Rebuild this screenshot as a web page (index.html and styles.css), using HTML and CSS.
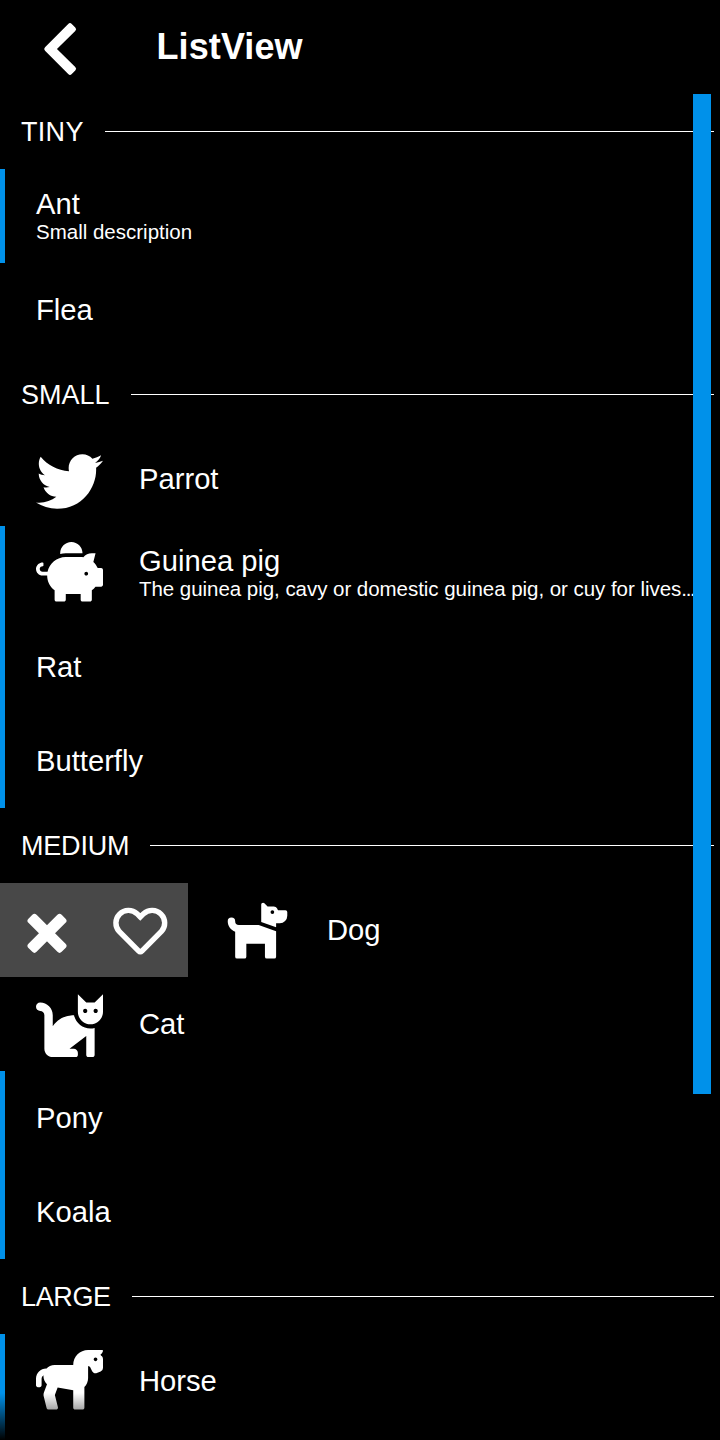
FILE: index.html
```html
<!DOCTYPE html>
<html lang="en">
<head>
<meta charset="utf-8">
<title>ListView</title>
<link rel="stylesheet" href="styles.css">
</head>
<body>
<div class="app">
  <header class="header">
    <svg class="back" viewBox="0 0 94 94"><path d="M46.8 49 70 25.7 73.5 29.2 53.4 49 73.5 68.8 70 72.3Z"/></svg>
    <h1 class="title">ListView</h1>
  </header>
  <main class="list">
    <h2 class="section wide"><span class="label">TINY</span></h2>
    <div class="row marked"><div class="text"><div class="name">Ant</div><div class="desc">Small description</div></div></div>
    <div class="row"><div class="name">Flea</div></div>

    <h2 class="section"><span class="label">SMALL</span></h2>
    <div class="row">
      <svg class="icon bird" viewBox="0 0 512 512"><path d="M459.37 151.716c.325 4.548.325 9.097.325 13.645 0 138.72-105.583 298.558-298.558 298.558-59.452 0-114.68-17.219-161.137-47.106 8.447.974 16.568 1.299 25.34 1.299 49.055 0 94.213-16.568 130.274-44.832-46.132-.975-84.792-31.188-98.112-72.772 6.498.974 12.995 1.624 19.818 1.624 9.421 0 18.843-1.3 27.614-3.573-48.081-9.747-84.143-51.98-84.143-102.985v-1.299c13.969 7.797 30.214 12.67 47.431 13.319-28.264-18.843-46.781-51.005-46.781-87.391 0-19.492 5.197-37.36 14.294-52.954 51.655 63.675 129.3 105.258 216.365 109.807-1.624-7.797-2.599-15.918-2.599-24.04 0-57.828 46.782-104.934 104.934-104.934 30.213 0 57.502 12.67 76.67 33.137 23.715-4.548 46.456-13.32 66.599-25.34-7.798 24.366-24.366 44.833-46.132 57.827 21.117-2.273 41.584-8.122 60.426-16.243-14.292 20.791-32.161 39.308-52.628 54.253z"/></svg>
      <div class="name">Parrot</div>
    </div>
    <div class="row marked">
      <svg class="icon" viewBox="0 0 576 512"><path d="M560 224h-29.5c-8.8-20-21.6-37.7-37.4-52.5L512 96h-32c-29.4 0-55.4 13.5-73 34.3-7.6-1.1-15.1-2.3-23-2.3H256c-77.4 0-141.9 55-156.8 128H56c-14.8 0-26.5-13.5-23.5-28.8C34.7 215.8 45.4 208 57 208h1c3.3 0 6-2.7 6-6v-20c0-3.3-2.7-6-6-6-28.5 0-53.9 20.4-57.5 48.6C-3.9 258.8 22.7 288 56 288h40c0 52.2 25.4 98.1 64 127.3V496c0 8.8 7.2 16 16 16h64c8.8 0 16-7.2 16-16v-48h128v48c0 8.8 7.2 16 16 16h64c8.8 0 16-7.2 16-16v-80.7c11.8-8.9 22.3-19.4 31.3-31.3H560c8.8 0 16-7.2 16-16V240c0-8.8-7.2-16-16-16zm-128 64c-8.8 0-16-7.2-16-16s7.2-16 16-16 16 7.2 16 16-7.2 16-16 16zM256 96h128c5.4 0 10.7.4 15.9.8 0-.3.1-.5.1-.8 0-53-43-96-96-96s-96 43-96 96c0 2.1.5 4.1.6 6.2 15.2-3.9 31-6.2 47.4-6.2z"/></svg>
      <div class="text"><div class="name">Guinea pig</div><div class="desc long">The guinea pig, cavy or domestic guinea pig, or cuy for lives<span class="dots">...</span></div></div>
    </div>
    <div class="row marked"><div class="name">Rat</div></div>
    <div class="row marked"><div class="name">Butterfly</div></div>

    <h2 class="section snug"><span class="label">MEDIUM</span></h2>
    <div class="row swiped">
      <div class="actions">
        <svg class="action" viewBox="0 0 94 94"><g transform="translate(47 50.3) rotate(45)"><rect x="-23.5" y="-5.75" width="47" height="11.5" rx="3"/><rect x="-5.75" y="-23.5" width="11.5" height="47" rx="3"/></g></svg>
        <svg class="action outline" viewBox="0 0 94 94"><path d="M46.3 34 43 30.7A12.6 12.6 0 0 0 25.2 48.5L44.5 67.8Q46.3 69.6 48.1 67.8L67.4 48.5A12.6 12.6 0 0 0 49.6 30.7Z"/></svg>
      </div>
      <svg class="icon" viewBox="0 0 576 512"><path d="M298.06,224,448,277.55V496a16,16,0,0,1-16,16H368a16,16,0,0,1-16-16V384H192V496a16,16,0,0,1-16,16H112a16,16,0,0,1-16-16V282.09C58.84,268.84,32,233.66,32,192a32,32,0,0,1,64,0,32.06,32.06,0,0,0,32,32ZM544,112v32a64,64,0,0,1-64,64H448v35.58L320,197.87V48c0-14.25,17.22-21.39,27.31-11.31L374.59,64h53.63c10.91,0,23.75,7.92,28.62,17.69L464,96h64A16,16,0,0,1,544,112Zm-112,0a16,16,0,1,0-16,16A16,16,0,0,0,432,112Z"/></svg>
      <div class="name">Dog</div>
    </div>
    <div class="row">
      <svg class="icon" viewBox="0 0 512 512"><path d="M290.59 192c-20.18 0-106.82 1.98-162.59 85.95V192c0-52.94-43.06-96-96-96-17.67 0-32 14.33-32 32s14.33 32 32 32c17.64 0 32 14.36 32 32v256c0 35.3 28.7 64 64 64h176c8.84 0 16-7.16 16-16v-16c0-17.67-14.33-32-32-32h-32l128-96v144c0 8.84 7.16 16 16 16h32c8.84 0 16-7.16 16-16V289.86c-10.29 2.67-20.89 4.54-32 4.54-61.81 0-113.52-44.05-125.41-102.4zM448 96h-64l-64-64v134.4c0 53.02 42.98 96 96 96s96-42.98 96-96V32l-64 64zm-72 80c-8.84 0-16-7.16-16-16s7.16-16 16-16 16 7.16 16 16-7.16 16-16 16zm80 0c-8.84 0-16-7.16-16-16s7.16-16 16-16 16 7.16 16 16-7.16 16-16 16z"/></svg>
      <div class="name">Cat</div>
    </div>
    <div class="row marked"><div class="name">Pony</div></div>
    <div class="row marked"><div class="name">Koala</div></div>

    <h2 class="section tight"><span class="label">LARGE</span></h2>
    <div class="row marked">
      <svg class="icon" viewBox="0 0 576 512"><path d="M575.92 76.6c-.01-8.13-3.02-15.87-8.58-21.8-3.78-4.03-8.58-9.12-13.69-14.5 11.06-6.84 19.5-17.49 22.18-30.66C576.85 4.68 572.96 0 567.9 0H447.92c-70.69 0-128 57.31-128 128H160c-28.84 0-54.4 12.98-72 33.11V160c-48.53 0-88 39.47-88 88v56c0 8.84 7.16 16 16 16h16c8.84 0 16-7.16 16-16v-56c0-13.22 6.87-24.39 16.78-31.68-.21 2.58-.78 5.05-.78 7.68 0 27.64 11.84 52.36 30.54 69.88l-25.72 68.6a63.945 63.945 0 0 0-2.16 37.99l24.85 99.41A15.982 15.982 0 0 0 107.02 512h65.96c10.41 0 18.05-9.78 15.52-19.88l-26.31-105.26 23.84-63.59L320 345.6V496c0 8.84 7.16 16 16 16h64c8.84 0 16-7.16 16-16V318.22c19.74-20.19 32-47.75 32-78.22 0-.22-.07-.42-.08-.64V136.89l16 7.11 18.9 37.7c7.45 14.87 25.05 21.55 40.49 15.37l32.55-13.02a31.997 31.997 0 0 0 20.12-29.74l-.06-77.71zm-64 19.4c-8.84 0-16-7.16-16-16s7.16-16 16-16 16 7.16 16 16-7.16 16-16 16z"/></svg>
      <div class="name">Horse</div>
    </div>
    <div class="row marked"></div>
  </main>
  <div class="fade"></div>
  <div class="scrollbar"></div>
</div>
</body>
</html>
```

FILE: styles.css
```css
* { box-sizing: border-box; }

body {
  margin: 0;
  background: #000;
  color: #fff;
  font-family: "Liberation Sans", Arial, sans-serif;
}

.app {
  position: relative;
  width: 720px;
  height: 1440px;
  overflow: hidden;
}

.header {
  display: flex;
  align-items: center;
  height: 94px;
}

.back {
  width: 94px;
  height: 94px;
  fill: #fff;
  stroke: #fff;
  stroke-width: 5;
  stroke-linejoin: round;
}

.title {
  margin: 0 0 0 62.5px;
  font-size: 36px;
  line-height: 40px;
  font-weight: 700;
  letter-spacing: 0.1px;
}

.section {
  display: flex;
  align-items: center;
  gap: 21px;
  height: 75px;
  margin: 0;
  padding: 0 6px 0 21px;
  font-size: 27px;
  font-weight: 400;
}

.section::after {
  content: "";
  flex: 1;
  height: 1px;
  background: #fff;
}

.label { padding-top: 2px; }
.wide { letter-spacing: 0.3px; }
.snug { letter-spacing: -0.2px; }
.tight { letter-spacing: -0.35px; }

.row {
  display: flex;
  align-items: center;
  gap: 36px;
  height: 94px;
  padding-left: 31px;
  border-left: 5px solid transparent;
  white-space: nowrap;
}

.marked { border-left-color: #0091ea; }

.swiped {
  padding-left: 0;
  border-left: 0;
}

.text { padding-bottom: 2px; }

.name {
  font-size: 29.2px;
  line-height: 34px;
}

.desc {
  font-size: 20.5px;
  line-height: 22px;
}

.long { letter-spacing: -0.04px; }
.dots { letter-spacing: -1.3px; }

.icon {
  flex: none;
  width: 67px;
  height: auto;
  margin-bottom: 1.5px;
  fill: #fff;
}

.bird {
  margin-top: 5px;
  margin-bottom: 0;
}

.actions {
  display: flex;
  width: 188px;
  height: 94px;
  background: #484848;
}

.action {
  width: 94px;
  height: 94px;
  fill: #fff;
}

.outline {
  fill: none;
  stroke: #fff;
  stroke-width: 5.4;
}

.fade {
  position: absolute;
  left: 0;
  right: 0;
  bottom: 0;
  height: 47px;
  background: linear-gradient(transparent, #000);
}

.scrollbar {
  position: absolute;
  top: 94px;
  right: 9px;
  width: 18px;
  height: 1000px;
  background: #0091ea;
}
```
